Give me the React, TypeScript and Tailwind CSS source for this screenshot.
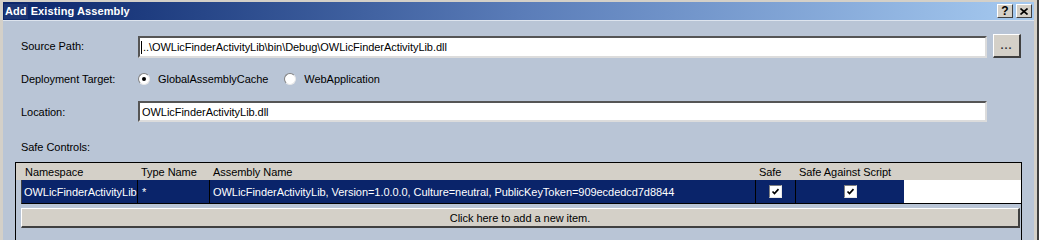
import { ReactNode } from 'react';

const raised = 'bg-[#d4d0c8] border border-t-white border-l-white border-b-[#404040] border-r-[#404040]';
const sunken = 'bg-white border-2 border-t-[#555555] border-l-[#555555] border-b-[#dcdcdc] border-r-[#dcdcdc]';

const Radio = ({ checked }: { checked?: boolean }) => (
  <div className="w-[12px] h-[12px] rounded-full bg-white border border-t-[#808080] border-l-[#808080] border-b-[#e8e8e8] border-r-[#e8e8e8] flex items-center justify-center">
    {checked && <div className="w-[4px] h-[4px] rounded-full bg-black" />}
  </div>
);

const Check = () => (
  <div className="w-[13px] h-[13px] bg-white border border-t-[#808080] border-l-[#808080] border-b-[#e8e8e8] border-r-[#e8e8e8] flex items-center justify-center">
    <svg width="9" height="9" viewBox="0 0 9 9">
      <polyline points="1.5,4.5 3.5,6.5 7.5,2.2" fill="none" stroke="#000" strokeWidth="1.7" />
    </svg>
  </div>
);

const Label = ({ children, w = 'w-[117px]' }: { children: ReactNode; w?: string }) => (
  <div className={`${w} shrink-0 self-center leading-[14px]`}>{children}</div>
);

const HeaderCell = ({ w, children }: { w: string; children?: ReactNode }) => (
  <div className={`${w} shrink-0 h-full flex items-center pl-[3px]`}>
    <span className="leading-[14px]">{children}</span>
  </div>
);

export default function App() {
  return (
    <div className="w-[1039px] h-[240px] overflow-hidden bg-[#3e3e3e] text-[11px] tracking-[-0.05px] text-black font-['Liberation_Sans',Arial,sans-serif]">
      <div className="w-[1037px] h-full bg-[#d4d0c8] pt-[2px] px-[3px] flex flex-col">
        {/* title bar */}
        <div className="h-[18px] shrink-0 flex items-center bg-gradient-to-r from-[#0a246a] via-[#5a7cb8] to-[#a6caf0] pr-[2px]">
          <span className="ml-[1px] px-[1px] h-[15px] flex items-center bg-[#1d3675] text-white font-bold tracking-[0.1px]">Add</span>
          <span className="ml-[3px] text-white font-bold tracking-[0.1px]">Existing Assembly</span>
          <div className="ml-auto flex gap-[3px]">
            <div className={`${raised} w-[16px] h-[14px] flex items-center justify-center font-bold text-[12px] leading-none`}>?</div>
            <div className={`${raised} w-[16px] h-[14px] flex items-center justify-center`}>
              <svg width="8" height="7" viewBox="0 0 8 7">
                <path d="M0.5 0.5 L7.5 6.5 M7.5 0.5 L0.5 6.5" stroke="#000" strokeWidth="1.6" />
              </svg>
            </div>
          </div>
        </div>

        {/* body */}
        <div className="flex-1 bg-[#b9c5d6] border-t border-[#dde4ee] pl-[12px] flex flex-col">
          <div className="ml-[6px] mt-[13px] h-[24px] flex">
            <Label>Source Path:</Label>
            <div className={`${sunken} w-[849px] h-[22px] self-end flex items-center pl-[1px]`}>
              <div className="w-[1px] h-[13px] bg-black mr-[1px]" />
              <span className="leading-[14px] whitespace-nowrap">..\OWLicFinderActivityLib\bin\Debug\OWLicFinderActivityLib.dll</span>
            </div>
            <div className={`${raised} border-b-2 border-r-2 ml-[6px] w-[28px] h-[24px] flex items-end justify-center pb-[5px]`}>
              <span className="leading-none tracking-[1px] font-bold text-[#333]">...</span>
            </div>
          </div>

          <div className="ml-[6px] mt-[13px] h-[16px] flex items-center">
            <Label>Deployment Target:</Label>
            <Radio checked />
            <span className="ml-[8px] leading-[14px]">GlobalAssemblyCache</span>
            <div className="ml-[16px]">
              <Radio />
            </div>
            <span className="ml-[8px] leading-[14px]">WebApplication</span>
          </div>

          <div className="ml-[6px] mt-[14px] h-[21px] flex">
            <Label>Location:</Label>
            <div className={`${sunken} w-[849px] h-[21px] flex items-center pl-[2px]`}>
              <span className="leading-[14px]">OWLicFinderActivityLib.dll</span>
            </div>
          </div>

          <div className="ml-[6px] mt-[18px] h-[14px] flex">
            <Label>Safe Controls:</Label>
          </div>

          {/* grid */}
          <div className="mt-[8px] w-[1007px] flex-1 border-t border-l border-r border-black flex flex-col">
            <div className="h-[17px] shrink-0 bg-[#d4d0c8] flex">
              <div className="w-[6px] shrink-0" />
              <HeaderCell w="w-[116px]">Namespace</HeaderCell>
              <HeaderCell w="w-[72px]">Type Name</HeaderCell>
              <HeaderCell w="w-[546px]">Assembly Name</HeaderCell>
              <HeaderCell w="w-[40px]">Safe</HeaderCell>
              <HeaderCell w="w-[109px]">Safe Against Script</HeaderCell>
            </div>

            <div className="ml-[5px] h-[24px] shrink-0 flex border-l border-b border-black border-l-[#404040]">
              <div className="w-[116px] shrink-0 bg-[#0a246a] text-white border-r border-black flex items-center pl-[2px]">
                <span className="leading-[14px] whitespace-nowrap">OWLicFinderActivityLib</span>
              </div>
              <div className="w-[72px] shrink-0 bg-[#0a246a] text-white border-r border-black flex items-center pl-[4px]">
                <span className="leading-[14px]">*</span>
              </div>
              <div className="w-[546px] shrink-0 bg-[#0a246a] text-white border-r border-black flex items-center pl-[3px]">
                <span className="leading-[14px] whitespace-nowrap">
                  OWLicFinderActivityLib, Version=1.0.0.0, Culture=neutral, PublicKeyToken=909ecdedcd7d8844
                </span>
              </div>
              <div className="w-[40px] shrink-0 bg-[#0a246a] border-r border-black flex items-center justify-center">
                <Check />
              </div>
              <div className="w-[108px] shrink-0 bg-[#0a246a] flex items-center justify-center">
                <Check />
              </div>
              <div className="flex-1 bg-white" />
            </div>

            <div className={`${raised} border-b-2 border-r-2 ml-[5px] mr-[1px] mt-[4px] h-[20px] shrink-0 flex items-center justify-center`}>
              <span className="leading-[14px]">Click here to add a new item.</span>
            </div>
          </div>
        </div>
      </div>
    </div>
  );
}
